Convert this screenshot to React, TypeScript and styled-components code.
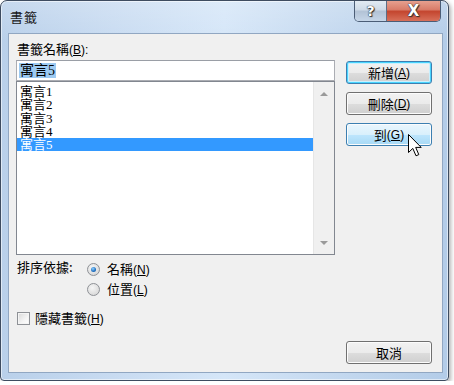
import React from "react";
import styled, { createGlobalStyle, css } from "styled-components";

const Global = createGlobalStyle`
  html, body { margin: 0; padding: 0; background: #ffffff; }
  body { font-family: "Noto Sans CJK TC", "Noto Sans", sans-serif; color: #000; }
  * { box-sizing: border-box; }
`;

const Window = styled.div`
  position: relative;
  width: 449px;
  height: 381px;
  border: 1px solid #3e4c60;
  border-radius: 7px 7px 4px 4px;
  background:
    linear-gradient(to bottom, rgba(255,255,255,0.2), rgba(255,255,255,0) 40px),
    linear-gradient(to right, #b9d0ea 0%, #c8dbf1 25%, #d5e6f8 50%, #c6daf0 72%, #b3cce8 100%);
  box-shadow: inset 0 0 0 1px rgba(255,255,255,0.55), 2px 2px 4px rgba(0,0,0,0.3);
  display: flex;
  flex-direction: column;
  overflow: hidden;
`;

const TitleBar = styled.div`
  height: 32px;
  display: flex;
  align-items: flex-start;
`;

const Title = styled.div`
  padding: 8px 0 0 9px;
  font-size: 13px;
  line-height: 16px;
  letter-spacing: 1px;
  color: #1a1a1a;
  flex: 1;
`;

const Caption = styled.div`
  display: flex;
  margin: -1px 7px 0 0;
  height: 22px;
  border: 1px solid #4b5d76;
  border-top: none;
  border-radius: 0 0 5px 5px;
  overflow: hidden;
`;

const CapBtn = styled.div<{ $kind: "help" | "close" }>`
  display: flex;
  align-items: center;
  justify-content: center;
  font-family: "DejaVu Sans", sans-serif;
  font-weight: bold;
  color: #fff;
  font-size: 14px;
  text-shadow: 0 0 1px #222, 0 0 1px #222, 1px 1px 1px #333;
  ${(p) =>
    p.$kind === "help"
      ? css`
          width: 32px;
          background: linear-gradient(to bottom, #e4ecf4 0%, #cfdbe8 45%, #b3c3d6 55%, #c6d6e8 100%);
          border-right: 1px solid #5c6e86;
        `
      : css`
          width: 53px;
          background: linear-gradient(to bottom, #e8a493 0%, #d97d6a 45%, #c4462f 55%, #d7705a 100%);
          font-size: 15px;
        `}
`;

const Client = styled.div`
  flex: 1;
  margin: 0 5px 7px 7px;
  border: 1px solid #91a7c2;
  background: #f0f0f0;
  display: flex;
  gap: 11px;
  padding: 7px 10px 8px 7px;
`;

const LeftCol = styled.div`
  width: 319px;
  display: flex;
  flex-direction: column;
`;

const Label = styled.div`
  font-size: 13px;
  line-height: 16px;
  padding-left: 1px;
  margin-bottom: 2px;
`;

const Edit = styled.div`
  height: 21px;
  border: 1px solid #abadb3;
  border-top-color: #9a9ea6;
  background: #fff;
  padding: 0 0 0 2px;
  display: flex;
  align-items: center;
`;

const EditSel = styled.span`
  display: block;
  background: #9ccaf2;
  font-family: "Liberation Serif", "Noto Sans CJK TC", serif;
  font-size: 14px;
  line-height: 15px;
  height: 15px;
  padding: 0 1px;
`;

const List = styled.div`
  height: 174px;
  border: 1px solid #828790;
  background: #fff;
  display: flex;
`;

const Items = styled.div`
  flex: 1;
  padding-top: 3px;
`;

const Item = styled.div<{ $sel?: boolean }>`
  height: 13.25px;
  line-height: 13px;
  font-family: "Liberation Serif", "Noto Sans CJK TC", serif;
  font-size: 13px;
  padding-left: 3px;
  ${(p) => p.$sel && css`background: #3399ff; color: #fff;`}
`;

const ScrollBar = styled.div`
  width: 21px;
  background: #f0f0f0;
  border-left: 1px solid #e6e6e6;
  display: flex;
  flex-direction: column;
  justify-content: space-between;
  align-items: center;
  padding: 10px 0 9px;
`;

const Arrow = styled.div<{ $down?: boolean }>`
  width: 0;
  height: 0;
  border-left: 4px solid transparent;
  border-right: 4px solid transparent;
  ${(p) =>
    p.$down
      ? css`border-top: 4px solid #9a9a9a;`
      : css`border-bottom: 4px solid #9a9a9a;`}
`;

const SortRow = styled.div`
  display: flex;
  margin-top: 4px;
`;

const SortLabel = styled.div`
  width: 71px;
  font-size: 13px;
  line-height: 16px;
  padding-left: 1px;
`;

const Radios = styled.div`
  display: flex;
  flex-direction: column;
  gap: 4px;
  padding-top: 2px;
`;

const Option = styled.div`
  display: flex;
  align-items: center;
  gap: 7px;
  font-size: 13px;
  line-height: 16px;
  height: 16px;
`;

const Radio = styled.div<{ $on?: boolean }>`
  width: 13px;
  height: 13px;
  border-radius: 50%;
  border: 1px solid #8e9196;
  background: radial-gradient(circle at 40% 35%, #f6f6f6 0%, #dcdcdc 70%, #cfcfcf 100%);
  display: flex;
  align-items: center;
  justify-content: center;
  &::after {
    content: "";
    display: ${(p) => (p.$on ? "block" : "none")};
    width: 5px;
    height: 5px;
    border-radius: 50%;
    background: radial-gradient(circle at 40% 35%, #8fd0ff 0%, #1f6fc0 60%, #0f4f98 100%);
  }
`;

const CheckRow = styled.div`
  display: flex;
  align-items: center;
  gap: 5px;
  margin-top: 13px;
  font-size: 13px;
  line-height: 16px;
  padding-left: 1px;
`;

const Check = styled.div`
  width: 13px;
  height: 13px;
  border: 1px solid #8e9196;
  background: linear-gradient(135deg, #d8d8d8 0%, #f4f4f4 60%, #ffffff 100%);
  box-shadow: inset 0 0 0 1px #f4f4f4;
`;

const RightCol = styled.div`
  width: 86px;
  display: flex;
  flex-direction: column;
  gap: 8px;
  padding-top: 20px;
`;

const Button = styled.div<{ $variant?: "default" | "hover" }>`
  height: 23px;
  border: 1px solid #707070;
  border-radius: 3px;
  display: flex;
  align-items: center;
  justify-content: center;
  font-size: 13px;
  line-height: 16px;
  background: linear-gradient(to bottom, #f2f2f2 0%, #ebebeb 50%, #dddddd 51%, #cfcfcf 100%);
  box-shadow: inset 0 0 0 1px #fcfcfc;
  ${(p) =>
    p.$variant === "default" &&
    css`
      border-color: #3c7fb1;
      box-shadow: inset 0 0 0 1px #48d4fe, inset 0 0 0 2px #c9f0fe;
    `}
  ${(p) =>
    p.$variant === "hover" &&
    css`
      border-color: #3c7fb1;
      background: linear-gradient(to bottom, #eaf6fd 0%, #d9f0fc 50%, #bee6fd 51%, #a7d9f5 100%);
    `}
`;

const Cancel = styled(Button)`
  margin-top: auto;
`;

const Cursor = styled.svg`
  position: absolute;
  left: 407px;
  top: 133px;
`;

const Mn = styled.span`
  font-family: "Liberation Sans", sans-serif;
  font-size: 12px;
`;

export default function App() {
  return (
    <>
      <Global />
      <Window>
        <TitleBar>
          <Title>書籤</Title>
          <Caption>
            <CapBtn $kind="help">?</CapBtn>
            <CapBtn $kind="close">X</CapBtn>
          </Caption>
        </TitleBar>
        <Client>
          <LeftCol>
            <Label>
              書籤名稱<Mn>(<u>B</u>):</Mn>
            </Label>
            <Edit>
              <EditSel>寓言5</EditSel>
            </Edit>
            <List>
              <Items>
                <Item>寓言1</Item>
                <Item>寓言2</Item>
                <Item>寓言3</Item>
                <Item>寓言4</Item>
                <Item $sel>寓言5</Item>
              </Items>
              <ScrollBar>
                <Arrow />
                <Arrow $down />
              </ScrollBar>
            </List>
            <SortRow>
              <SortLabel>排序依據:</SortLabel>
              <Radios>
                <Option>
                  <Radio $on />
                  <span>
                    名稱<Mn>(<u>N</u>)</Mn>
                  </span>
                </Option>
                <Option>
                  <Radio />
                  <span>
                    位置<Mn>(<u>L</u>)</Mn>
                  </span>
                </Option>
              </Radios>
            </SortRow>
            <CheckRow>
              <Check />
              <span>
                隱藏書籤<Mn>(<u>H</u>)</Mn>
              </span>
            </CheckRow>
          </LeftCol>
          <RightCol>
            <Button $variant="default">
              新增<Mn>(<u>A</u>)</Mn>
            </Button>
            <Button>
              刪除<Mn>(<u>D</u>)</Mn>
            </Button>
            <Button $variant="hover">
              到<Mn>(<u>G</u>)</Mn>
            </Button>
            <Cancel>取消</Cancel>
          </RightCol>
        </Client>
        <Cursor width="16" height="24" viewBox="0 0 16 24">
          <path
            d="M0.5 0.5 L0.5 18.5 L4.8 14.4 L8 21.8 L10.8 20.6 L7.7 13.4 L13.2 13.4 Z"
            fill="#fff"
            stroke="#000"
            strokeWidth="1"
            strokeLinejoin="round"
          />
        </Cursor>
      </Window>
    </>
  );
}
